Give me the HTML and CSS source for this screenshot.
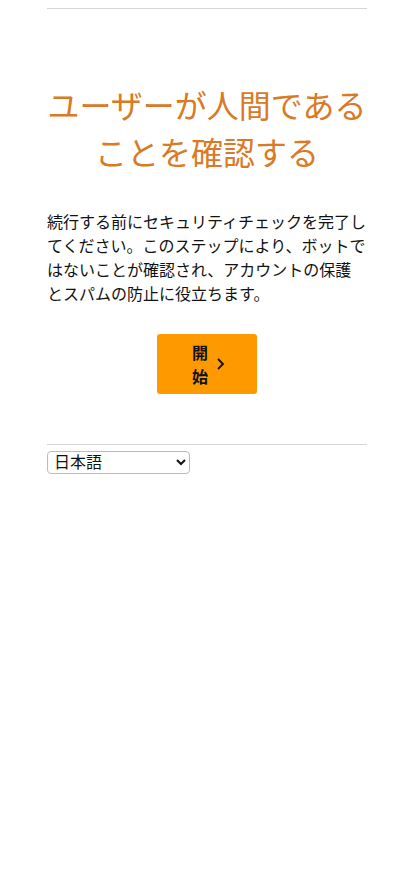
FILE: index.html
```html
<!DOCTYPE html>
<html lang="ja">
<head>
<meta charset="utf-8">
<link rel="stylesheet" href="styles.css">
</head>
<body>
<main class="wrap">
  <hr class="rule">
  <h1 class="title">ユーザーが人間であることを確認する</h1>
  <p class="desc">続行する前にセキュリティチェックを完了してください。このステップにより、ボットではないことが確認され、アカウントの保護とスパムの防止に役立ちます。</p>
  <div class="actions">
    <button class="start" type="button"><span class="start-label">開始</span><svg class="chev" width="10" height="14" viewBox="0 0 10 14"><path d="M2 2l5 5-5 5" fill="none" stroke="#111" stroke-width="1.8"/></svg></button>
  </div>
  <hr class="rule rule-bottom">
  <select class="lang"><option>日本語</option></select>
</main>
</body>
</html>
```
FILE: styles.css
```css
html, body { margin: 0; padding: 0; background: #fff; }
body {
  font-family: "Noto Sans CJK JP", "Noto Sans", sans-serif;
  color: #111;
}
.wrap {
  width: 320px;
  margin: 0 auto;
  padding-top: 8px;
}
.rule {
  border: 0;
  border-top: 1px solid #d6d6d6;
  margin: 0;
}
.title {
  margin: 72px 0 0;
  font-size: 32px;
  font-weight: 400;
  line-height: 47px;
  text-align: center;
  color: #d97a26;
}
.desc {
  margin: 34px 0 0;
  font-size: 16px;
  line-height: 24px;
}
.actions {
  display: flex;
  justify-content: center;
  margin-top: 29px;
}
.start {
  width: 100px;
  height: 60px;
  background: #ff9900;
  border: 0;
  border-radius: 3px;
  display: flex;
  align-items: center;
  justify-content: center;
  gap: 8px;
  padding: 0 0 0 4px;
  font-family: inherit;
  font-size: 16px;
  font-weight: 700;
  color: #111;
  cursor: pointer;
}
.start-label {
  width: 16px;
  line-height: 24px;
}
.rule-bottom { margin-top: 50px; }
.lang {
  display: block;
  margin-top: 6px;
  width: 143px;
  height: 23px;
  padding: 0 2px;
  font-family: "Liberation Sans", "Noto Sans CJK JP", sans-serif;
  font-size: 16px;
  line-height: normal;
  border: 1px solid #bbb;
  border-radius: 4px;
  background: #fff;
  color: #111;
}
```
